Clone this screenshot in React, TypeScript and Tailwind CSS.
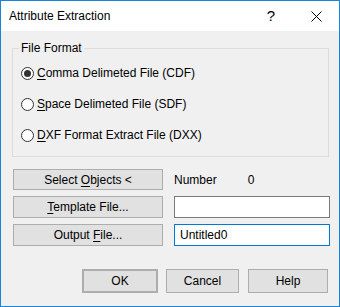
import React from "react";

const font = { fontFamily: '"Segoe UI", "Liberation Sans", Arial, sans-serif' };

function Mn({ children }: { children: React.ReactNode }) {
  return <span className="underline underline-offset-[2px] decoration-[1px]">{children}</span>;
}

function Radio({ checked, children }: { checked?: boolean; children: React.ReactNode }) {
  return (
    <label className="flex h-[16px] items-center">
      <span className="ml-[8px] flex h-[13px] w-[13px] items-center justify-center rounded-full border border-[#333] bg-white">
        {checked && <span className="h-[7px] w-[7px] rounded-full bg-[#333]" />}
      </span>
      <span className="ml-[3px] text-[12px] leading-[16px] text-black">{children}</span>
    </label>
  );
}

function Btn({ className, children }: { className?: string; children: React.ReactNode }) {
  return (
    <button
      className={
        "flex items-center justify-center border border-[#adadad] bg-[#e1e1e1] text-[12px] text-black " +
        (className ?? "")
      }
    >
      <span>{children}</span>
    </button>
  );
}

export default function App() {
  return (
    <div style={font} className="flex h-[307px] w-[340px] flex-col border border-[#1883d7] bg-[#f0f0f0]">
      {/* title bar */}
      <div className="flex h-[30px] shrink-0 items-center bg-white">
        <span className="ml-[8px] text-[12px] text-black">Attribute Extraction</span>
        <span className="ml-auto mr-[36px] text-[15px] text-black">?</span>
        <svg width="11" height="11" viewBox="0 0 11 11" className="mr-[17px]">
          <path d="M0.5 0.5 L10.5 10.5 M10.5 0.5 L0.5 10.5" stroke="#000" strokeWidth="1" />
        </svg>
      </div>

      {/* group box */}
      <div className="relative ml-[11px] mt-[17px] w-[317px] border border-[#dcdcdc] pb-[13px] pt-[16px]">
        <span className="absolute left-[6px] top-[-9px] bg-[#f0f0f0] px-[2px] text-[12px] leading-[16px] text-black">
          File Format
        </span>
        <div className="flex flex-col gap-[15px]">
          <Radio checked>
            <Mn>C</Mn>omma Delimeted File (CDF)
          </Radio>
          <Radio>
            <Mn>S</Mn>pace Delimeted File (SDF)
          </Radio>
          <Radio>
            <Mn>D</Mn>XF Format Extract File (DXX)
          </Radio>
        </div>
      </div>

      <div className="ml-[12px] mt-[12px] flex flex-col gap-[6px]">
        <div className="flex items-center">
          <Btn className="h-[21px] w-[150px]">
            Select <Mn>O</Mn>bjects &lt;
          </Btn>
          <span className="ml-[11px] text-[12px] text-black">Number</span>
          <span className="ml-[31px] text-[12px] text-black">0</span>
        </div>
        <div className="flex items-center">
          <Btn className="h-[22px] w-[150px]">
            <Mn>T</Mn>emplate File...
          </Btn>
          <div className="ml-[11px] h-[22px] w-[156px] border border-[#7a7a7a] bg-white" />
        </div>
        <div className="flex items-center">
          <Btn className="h-[22px] w-[150px]">
            Output <Mn>F</Mn>ile...
          </Btn>
          <div className="ml-[11px] flex h-[22px] w-[156px] items-center border border-[#0078d7] bg-white pl-[5px] text-[12px] text-black">
            Untitled0
          </div>
        </div>
      </div>

      <div className="ml-[81px] mt-[23px] flex">
        <Btn className="h-[24px] w-[76px] border-2 border-[#0078d7]">OK</Btn>
        <Btn className="ml-[8px] h-[24px] w-[73px]">Cancel</Btn>
        <Btn className="ml-[9px] h-[24px] w-[80px]">Help</Btn>
      </div>
    </div>
  );
}
